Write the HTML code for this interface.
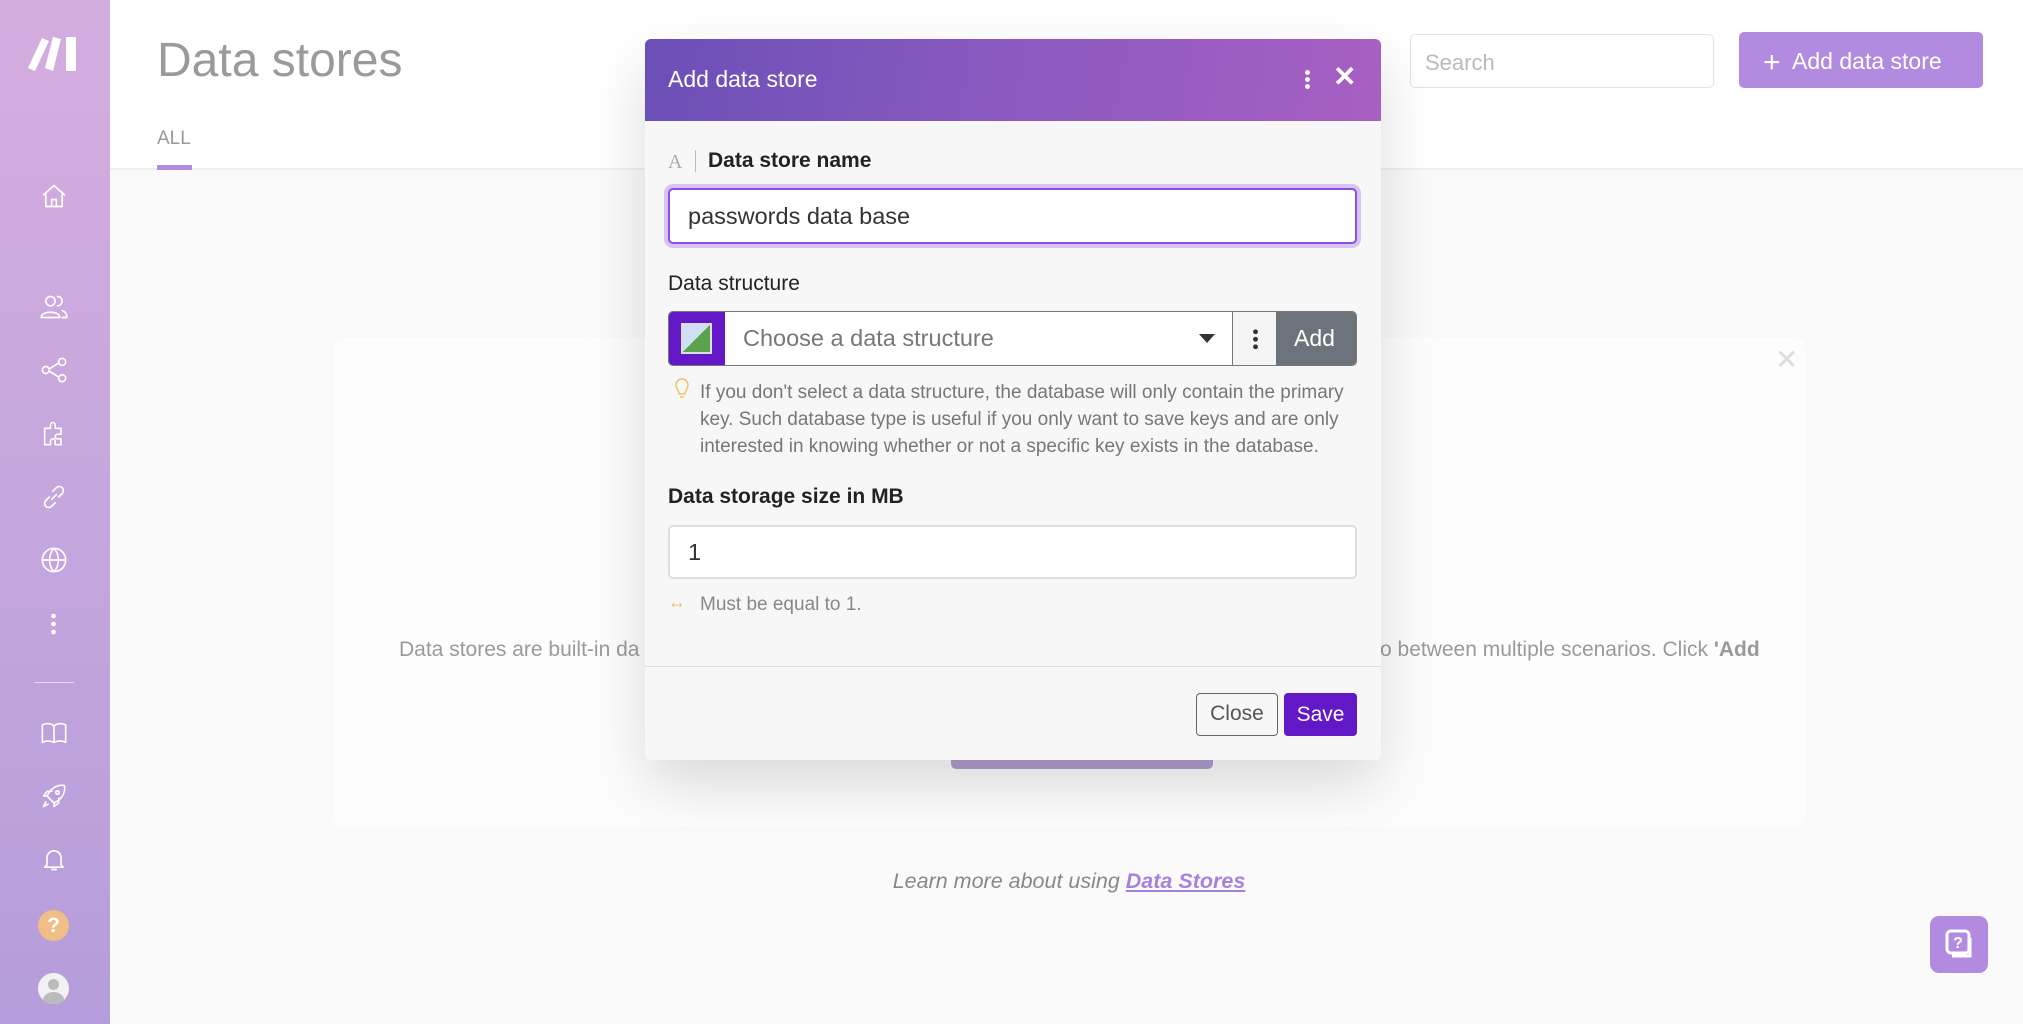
<!DOCTYPE html>
<html><head><meta charset="utf-8"><style>
*{box-sizing:border-box;margin:0;padding:0}
body{width:2023px;height:1024px;overflow:hidden;background:#fafafa;font-family:"Liberation Sans",sans-serif;position:relative}
.abs{position:absolute}
.side{left:0;top:0;width:110px;height:1024px;background:linear-gradient(180deg,#d4addf 0%,#c6a6dd 50%,#b59ddb 100%)}
.ic{position:absolute;left:40px;width:28px;height:28px}
.ic svg{width:28px;height:28px;stroke:#fff;fill:none;stroke-width:1.4;stroke-linecap:round;stroke-linejoin:round}
.top{left:110px;top:0;right:0;height:170px;background:#fff;border-bottom:2px solid #efefef}
</style></head><body>
<div class="abs side">
 <svg class="abs" style="left:28px;top:35px" width="52" height="37" viewBox="0 0 52 37"><path d="M0 33 L14 3 L21 6 L7 36Z M17 33 L25 2 L33 4 L25 36Z M38 2 H48 V36 H38Z" fill="#fff"/></svg>
 <div class="ic" style="top:182px"><svg viewBox="0 0 24 24"><path d="M3 11 L12 3 L21 11 M5 9 V21 H19 V9 M10 21 V15 H14 V21"/></svg></div>
 <div class="ic" style="top:293px"><svg viewBox="0 0 24 24"><circle cx="9" cy="7" r="4"/><path d="M1 21 C1 15 17 15 17 21Z"/><path d="M15 3 A4 4 0 0 1 15 11 M19 15 C22 16 23 18 23 21 H19"/></svg></div>
 <div class="ic" style="top:356px"><svg viewBox="0 0 24 24"><circle cx="5" cy="12" r="3"/><circle cx="19" cy="5" r="3"/><circle cx="19" cy="19" r="3"/><path d="M8 11 L16 6 M8 13 L16 18"/></svg></div>
 <div class="ic" style="top:419px"><svg viewBox="0 0 24 24"><path d="M4 8 H9 V5 A2 2 0 0 1 13 5 V8 H18 V13 H15 A2 2 0 0 0 15 17 H18 V22 H13 V19 A2 2 0 0 0 9 19 V22 H4Z"/></svg></div>
 <div class="ic" style="top:483px"><svg viewBox="0 0 24 24"><path d="M10 14 L14 10 M8 12 L5 15 A3.5 3.5 0 0 0 10 20 L13 17 M16 12 L19 9 A3.5 3.5 0 0 0 14 4 L11 7"/></svg></div>
 <div class="ic" style="top:546px"><svg viewBox="0 0 24 24"><circle cx="12" cy="12" r="10"/><path d="M2 12 H22 M12 2 C7 7 7 17 12 22 C17 17 17 7 12 2"/></svg></div>
 <div class="abs" style="left:51px;top:612px;width:5px;height:24px;background:radial-gradient(circle,#fff 2.2px,transparent 2.5px) 0 0/5px 8px"></div>
 <div class="abs" style="left:34px;top:682px;width:40px;height:1px;background:rgba(255,255,255,.6)"></div>
 <div class="ic" style="top:719px"><svg viewBox="0 0 24 24"><path d="M2 5 C6 3 10 4 12 6 C14 4 18 3 22 5 V20 C18 18 14 19 12 20 C10 19 6 18 2 20Z M12 6 V20"/></svg></div>
 <div class="ic" style="top:782px"><svg viewBox="0 0 24 24"><path d="M9 15 L6 12 C9 6 14 2 21 3 C22 10 18 15 12 18Z M6 12 L3 12 L6 8 H10 M12 18 V21 L16 18 V14 M5 17 L3 21 L7 19"/><circle cx="15" cy="9" r="1.5"/></svg></div>
 <div class="ic" style="top:845px"><svg viewBox="0 0 24 24"><path d="M6 17 V11 A6 6 0 0 1 18 11 V17 L20 19 H4Z M10 21 H14"/></svg></div>
 <div class="abs" style="left:38px;top:910px;width:31px;height:31px;border-radius:50%;background:#f0be86;color:#fff;font-size:21px;font-weight:bold;text-align:center;line-height:31px">?</div>
 <div class="abs" style="left:38px;top:973px;width:31px;height:31px;border-radius:50%;background:#f2f2f2;overflow:hidden"><div style="position:absolute;left:10px;top:6px;width:11px;height:11px;border-radius:50%;background:#bbb"></div><div style="position:absolute;left:5px;top:19px;width:21px;height:16px;border-radius:50%;background:#bbb"></div></div>
</div>
<div class="abs top"></div>
<div class="abs" style="left:157px;top:33px;font-size:48px;color:#9a9a9a;font-weight:300">Data stores</div>
<div class="abs" style="left:157px;top:128px;font-size:19px;color:#999">ALL</div>
<div class="abs" style="left:157px;top:165px;width:35px;height:5px;background:#b28ae0"></div>
<div class="abs" style="left:1410px;top:34px;width:304px;height:54px;border:1px solid #e2e2e2;border-radius:5px;background:#fff;font-size:22px;color:#bbb;padding:15px 0 0 14px">Search</div>
<div class="abs" style="left:1739px;top:32px;width:244px;height:56px;border-radius:5px;background:#b28ae0;color:#fff;font-size:23px;padding:14px 0 0 24px"><span style="font-size:30px;font-weight:300;vertical-align:-3px">+</span>&nbsp; Add data store</div>
<div class="abs" style="left:334px;top:338px;width:1471px;height:489px;background:#fdfdfd;border-radius:10px"></div>
<div class="abs" style="left:1775px;top:343px;font-size:28px;color:#ddd">✕</div>
<div class="abs" style="left:399px;top:638px;font-size:21px;color:#9a9a9a;white-space:nowrap">Data stores are built-in da</div>
<div class="abs" style="left:1380px;top:638px;font-size:21px;color:#9a9a9a;white-space:nowrap">o between multiple scenarios. Click <b>'Add</b></div>
<div class="abs" style="left:951px;top:752px;width:262px;height:17px;border-radius:5px;background:#b39fd0"></div>
<div class="abs" style="left:0;width:2023px;top:869px;text-align:center;padding-left:115px;font-size:21.5px;color:#888;font-style:italic">Learn more about using <b style="color:#a583da;text-decoration:underline">Data Stores</b></div>
<div class="abs" style="left:1930px;top:916px;width:58px;height:57px;border-radius:9px;background:#b28be0"><svg width="58" height="57" viewBox="0 0 58 57"><rect x="17" y="15" width="22" height="22" rx="4" fill="none" stroke="#fff" stroke-width="3"/><path d="M22 40 H40 V22" fill="none" stroke="#fff" stroke-width="3"/><text x="28" y="32" fill="#fff" font-size="16" font-weight="bold" text-anchor="middle" font-family="Liberation Sans">?</text></svg></div>
<!-- modal -->
<div class="abs" style="left:645px;top:39px;width:736px;height:721px;background:#f7f7f7;border-radius:6px;box-shadow:0 25px 60px rgba(0,0,0,.14);overflow:hidden">
 <div style="height:82px;background:linear-gradient(100deg,#6a4fb7 0%,#8b5ac0 50%,#a85fc2 100%);position:relative">
  <div class="abs" style="left:23px;top:27px;color:#fff;font-size:23px">Add data store</div>
  <div class="abs" style="left:660px;top:30px;width:5px;height:20px;background:radial-gradient(circle,#fff 2.2px,transparent 2.6px) 0 0/5px 7px"></div>
  <div class="abs" style="left:688px;top:21px;color:#fff;font-size:28px;font-weight:bold">✕</div>
 </div>
 <div class="abs" style="left:23px;top:112px;font-family:'Liberation Serif',serif;font-size:20px;color:#aaa">A</div>
 <div class="abs" style="left:50px;top:111px;width:1px;height:22px;background:#bbb"></div>
 <div class="abs" style="left:63px;top:110px;font-size:21px;font-weight:bold;color:#222">Data store name</div>
 <div class="abs" style="left:23px;top:149px;width:689px;height:56px;border:2px solid #8d4fe3;border-radius:5px;background:#fff;box-shadow:0 0 0 4px #d9c3f2;font-size:23.5px;color:#333;padding:13px 0 0 18px">passwords data base</div>
 <div class="abs" style="left:23px;top:233px;font-size:21px;color:#222">Data structure</div>
 <div class="abs" style="left:23px;top:272px;width:689px;height:55px;border:1px solid #777;border-radius:5px;background:#fff;overflow:hidden">
  <div class="abs" style="left:0;top:0;width:56px;height:55px;background:#6318c8"><div style="position:absolute;left:12px;top:11px;width:31px;height:31px;border:2px solid #ddd;background:linear-gradient(135deg,#cfe0f5 50%,#5aa24b 50%)"></div></div>
  <div class="abs" style="left:74px;top:13px;font-size:23.5px;color:#777">Choose a data structure</div>
  <div class="abs" style="left:530px;top:22px;width:0;height:0;border-left:8px solid transparent;border-right:8px solid transparent;border-top:9px solid #333"></div>
  <div class="abs" style="left:563px;top:0;width:44px;height:55px;background:#f5f5f5;border-left:1px solid #777"><div style="position:absolute;left:20px;top:16px;width:5px;height:22px;background:radial-gradient(circle,#333 2.2px,transparent 2.6px) 0 0/5px 7.5px"></div></div>
  <div class="abs" style="left:607px;top:0;width:82px;height:55px;background:#6c737b;color:#fff;font-size:23px;padding:13px 0 0 18px">Add</div>
 </div>
 <svg class="abs" style="left:29px;top:339px" width="16" height="22" viewBox="0 0 16 22"><path d="M5 16 C5 12 2 11 2 7 A6 6 0 0 1 14 7 C14 11 11 12 11 16Z M6 19 H10" fill="none" stroke="#f0c060" stroke-width="1.4"/></svg>
 <div class="abs" style="left:55px;top:340px;width:660px;font-size:19px;line-height:27px;color:#777">If you don't select a data structure, the database will only contain the primary key. Such database type is useful if you only want to save keys and are only interested in knowing whether or not a specific key exists in the database.</div>
 <div class="abs" style="left:23px;top:446px;font-size:21px;font-weight:bold;color:#222">Data storage size in MB</div>
 <div class="abs" style="left:23px;top:486px;width:689px;height:54px;border:2px solid #ddd;border-radius:5px;background:#fff;font-size:23.5px;color:#333;padding:12px 0 0 18px">1</div>
 <div class="abs" style="left:23px;top:553px;font-size:18px;color:#f0b860">↔</div>
 <div class="abs" style="left:55px;top:555px;font-size:19px;color:#888">Must be equal to 1.</div>
 <div class="abs" style="left:0;top:627px;width:736px;height:1px;background:#ddd"></div>
 <div class="abs" style="left:551px;top:654px;width:82px;height:43px;border:1.5px solid #666;border-radius:4px;font-size:21px;color:#555;text-align:center;line-height:40px">Close</div>
 <div class="abs" style="left:639px;top:654px;width:73px;height:43px;border-radius:4px;background:#6318c8;font-size:21px;color:#fff;text-align:center;line-height:43px">Save</div>
</div>
</body></html>
